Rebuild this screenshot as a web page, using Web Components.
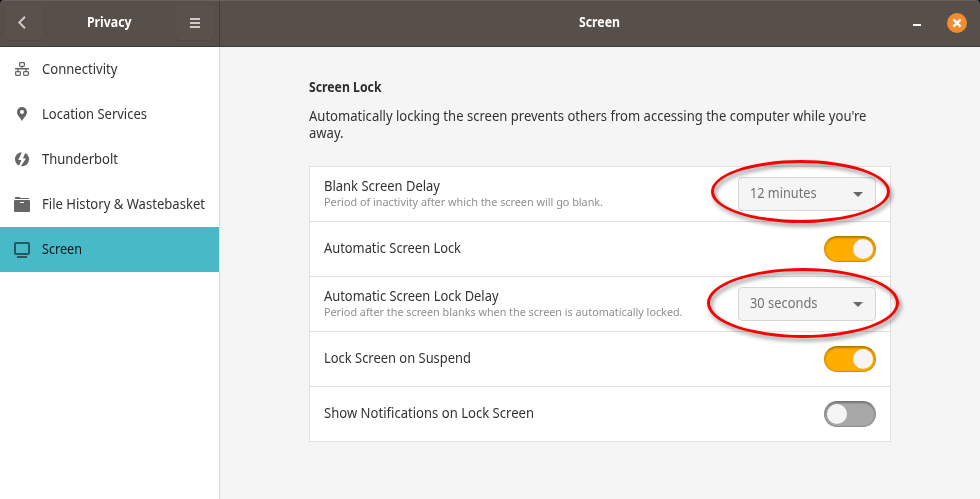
<!DOCTYPE html>
<html lang="en"><head><meta charset="utf-8"><title>Privacy – Screen</title>
<style>
html,body{margin:0;height:100%;overflow:hidden;background:#000}
body{font-family:"Noto Sans","Open Sans",sans-serif;font-size:14px;line-height:17px;color:#333}
</style></head><body>
<settings-window></settings-window>
<script>
function define(name, html, init){
  const t=document.createElement('template'); t.innerHTML=html;
  customElements.define(name, class extends HTMLElement{
    connectedCallback(){
      if(this.shadowRoot) return;
      this.attachShadow({mode:'open'}).append(t.content.cloneNode(true));
      if(init) init.call(this,this.shadowRoot);
    }
  });
}

// Text condensed to a given width (w, in px).
define('ui-text', `<style>
:host{display:block;white-space:nowrap;height:17px;line-height:17px}
span{display:inline-block;transform-origin:0 0;font-stretch:75%}
</style><span><slot></slot></span>`, function(root){
  const w=+this.getAttribute('w')-.5, s=root.querySelector('span');
  this.style.width=w+'px';
  s.style.transform='scaleX('+w/s.getBoundingClientRect().width+')';
});

const ICONS={
  network:'<g fill="none" stroke="currentColor" stroke-width="1.2"><rect x="5.600" y=".6" width="4.800" height="3.800" rx=".8"/><rect x="1.600" y="9.600" width="4.800" height="3.800" rx=".8"/><rect x="9.600" y="9.600" width="4.800" height="3.800" rx=".8"/><path d="M8 4.500V7M4 9.500V7M12 9.500V7"/></g><rect x="1" y="6" width="14" height="1.500" fill="currentColor"/>',
  location:'<path fill="currentColor" fill-rule="evenodd" d="M8 0a5 5 0 0 0-5 5c0 3.300 3 5.600 5 9 2-3.400 5-5.700 5-9a5 5 0 0 0-5-5zm0 3a2 2 0 1 1 0 4 2 2 0 0 1 0-4z"/>',
  bolt:'<g transform="translate(0 -.8)"><circle cx="8" cy="8" r="7" fill="currentColor"/><path fill="#fff" d="M8.300 0 4.300 8.800h3.100L4.500 16h1.600l5.900-8.800H8.900L11.700.700z"/></g>',
  archive:'<path fill="currentColor" fill-rule="evenodd" d="M1.500 0h4l1 1H15v1H1V.5zM1 3h14a1 1 0 0 1 1 1v10a1 1 0 0 1-1 1H1a1 1 0 0 1-1-1V4a1 1 0 0 1 1-1zm5 2v1h4V5z"/>',
  screen:'<rect x="1" y="1" width="14" height="11" rx="1" fill="none" stroke="currentColor" stroke-width="2"/><path fill="currentColor" d="M3 14h10v2H3z"/>',
  back:'<path d="M9 1.800 3.300 7.500 9 13.200" fill="none" stroke="currentColor" stroke-width="2"/>',
  menu:'<path fill="currentColor" d="M3 3h10v2H3zM3 7h10v2H3zM3 11h10v2H3z"/>',
  min:'<path fill="#fff" d="M4 9h8v2H4z"/>',
  close:'<path d="M4.400 4.400l7.200 7.200M11.600 4.400l-7.200 7.200" stroke="#fff" stroke-width="2.400"/>',
  arrow:'<path fill="#696969" d="M3 6h10l-5 5z"/>'
};
define('ui-icon', `<style>:host{display:block;width:16px;height:16px;flex:none}svg{display:block}</style><div></div>`, function(root){
  root.querySelector('div').innerHTML='<svg width="16" height="16" viewBox="0 0 16 16">'+ICONS[this.getAttribute('name')]+'</svg>';
});

define('header-button', `<style>
:host{display:grid;place-items:center;width:34px;height:32px;margin-top:-1px;border:1px solid #5c534e;border-radius:3px;background:#5a514c;color:#cdcac8;box-shadow:0 1px #514945}
</style><slot></slot>`);

define('title-bar', `<style>
:host{display:flex;height:45px;background:#574f4a;border-top:1px solid #69615d;border-bottom:1px solid #403a37;color:#fff;font-weight:700;border-radius:4px 4px 0 0;overflow:hidden}
.left{box-sizing:border-box;width:220px;border-right:1px solid #433d39;padding:0 6px;display:flex;align-items:center;justify-content:space-between}
.right{flex:1;display:grid;grid-template-columns:1fr 43px 1fr;align-items:center}
.right ui-text{grid-column:2}
.controls{display:flex;justify-content:flex-end;gap:22px;align-items:center;padding-right:13px;margin-top:-1px}
.close{width:20px;height:20px;border-radius:50%;background:#f28c2c;display:grid;place-items:center}
ui-text{margin-top:-4px}
</style>
<div class="left"><header-button><ui-icon name="back"></ui-icon></header-button><ui-text w="45">Privacy</ui-text><header-button><ui-icon name="menu"></ui-icon></header-button></div>
<div class="right"><ui-text w="41.500">Screen</ui-text><div class="controls"><ui-icon name="min"></ui-icon><div class="close"><ui-icon name="close"></ui-icon></div></div></div>`);

define('nav-item', `<style>
:host{display:flex;align-items:center;gap:12px;height:45px;padding-left:14px;color:#333}
:host([selected]){background:#48b9c7;color:#0b1516}
ui-icon{color:#666}
:host([selected]) ui-icon{color:#24595f}
ui-text{margin-top:-2px}
</style><ui-icon></ui-icon><ui-text><slot></slot></ui-text>`, function(root){
  // the parts are replaced so that they read their attributes when connected
  const i=document.createElement('ui-icon'); i.setAttribute('name',this.getAttribute('icon'));
  root.querySelector('ui-icon').replaceWith(i);
  const t=document.createElement('ui-text'); t.setAttribute('w',this.getAttribute('w')); t.textContent=this.textContent;
  root.querySelector('ui-text').replaceWith(t);
});

define('ui-switch', `<style>
:host{display:flex;box-sizing:border-box;width:52px;height:26px;border-radius:13px;padding:2px;border:1px solid #8d8d8d;border-top-color:#777;background:#a8a8a8;box-shadow:inset 0 1px 2px #0005;align-items:center}
:host([on]){justify-content:flex-end;background:#ffad00;border-color:#d18f05;border-top-color:#ae7600;box-shadow:inset 0 1px 2px #8a5a0099}
i{width:20px;height:20px;border-radius:50%;background:#f5f5f5}
</style><i></i>`);

define('ui-combo', `<style>
:host{display:flex;box-sizing:border-box;width:138px;height:34px;border:1px solid #d5d5d5;border-radius:4px;background:#f5f5f5;color:#737373;align-items:center;justify-content:space-between;padding:0 9px 0 11px}
</style><slot></slot><ui-icon name="arrow"></ui-icon>`);

define('setting-row', `<style>
:host{display:flex;height:54px;align-items:center;justify-content:space-between;padding:0 14px;border-bottom:1px solid #e0e0e0}
.t{display:flex;flex-direction:column;padding-bottom:3px}
</style><div class="t"><slot></slot></div><slot name="control"></slot>`);

define('red-ring', `<style>
:host{position:absolute;box-sizing:border-box;border:3px solid #f50303;border-radius:50%;filter:drop-shadow(2px 3px 2px #0007);pointer-events:none}
</style>`);

define('settings-window', `<style>
:host{display:flex;flex-direction:column;height:499px;width:980px;position:relative}
.body{display:flex;flex:1;background:#f5f5f5}
nav{width:219px;background:#fff;border-right:1px solid #dcdcdc}
main{padding:31px 0 0 89px}
h1{margin:0;font-size:14px;color:#2d2d2d}
.p{margin-top:12px;height:34px}
.list{margin-top:25px;width:580px;border:1px solid #e0e0e0;border-bottom:0;background:#fff}
.sub{font-size:11.600px;height:15px;color:#8e8e8e;line-height:16px}
.list ui-text:not(.sub){color:#333}
ui-combo ui-text{color:#737373!important;margin-top:-3px}
</style>
<title-bar></title-bar>
<div class="body">
<nav>
<nav-item icon="network" w="76">Connectivity</nav-item>
<nav-item icon="location" w="105.500">Location Services</nav-item>
<nav-item icon="bolt" w="76.500">Thunderbolt</nav-item>
<nav-item icon="archive" w="163.500">File History &amp; Wastebasket</nav-item>
<nav-item icon="screen" w="40.500" selected>Screen</nav-item>
</nav>
<main>
<h1><ui-text w="73">Screen Lock</ui-text></h1>
<ui-text class="p" w="558">Automatically locking the screen prevents others from accessing the computer while you're<br>away.</ui-text>
<div class="list">
<setting-row><ui-text w="116.500">Blank Screen Delay</ui-text><ui-text class="sub" w="279.500">Period of inactivity after which the screen will go blank.</ui-text><ui-combo slot="control"><ui-text w="67">12 minutes</ui-text></ui-combo></setting-row>
<setting-row><ui-text w="137.500">Automatic Screen Lock</ui-text><ui-switch slot="control" on></ui-switch></setting-row>
<setting-row><ui-text w="175">Automatic Screen Lock Delay</ui-text><ui-text class="sub" w="359">Period after the screen blanks when the screen is automatically locked.</ui-text><ui-combo slot="control"><ui-text w="68">30 seconds</ui-text></ui-combo></setting-row>
<setting-row><ui-text w="147.500">Lock Screen on Suspend</ui-text><ui-switch slot="control" on></ui-switch></setting-row>
<setting-row><ui-text w="210.500">Show Notifications on Lock Screen</ui-text><ui-switch slot="control"></ui-switch></setting-row>
</div>
</main>
</div>
<red-ring style="left:711px;top:160px;width:179px;height:63px"></red-ring>
<red-ring style="left:707px;top:268px;width:192px;height:70px"></red-ring>`);
</script>
</body></html>
